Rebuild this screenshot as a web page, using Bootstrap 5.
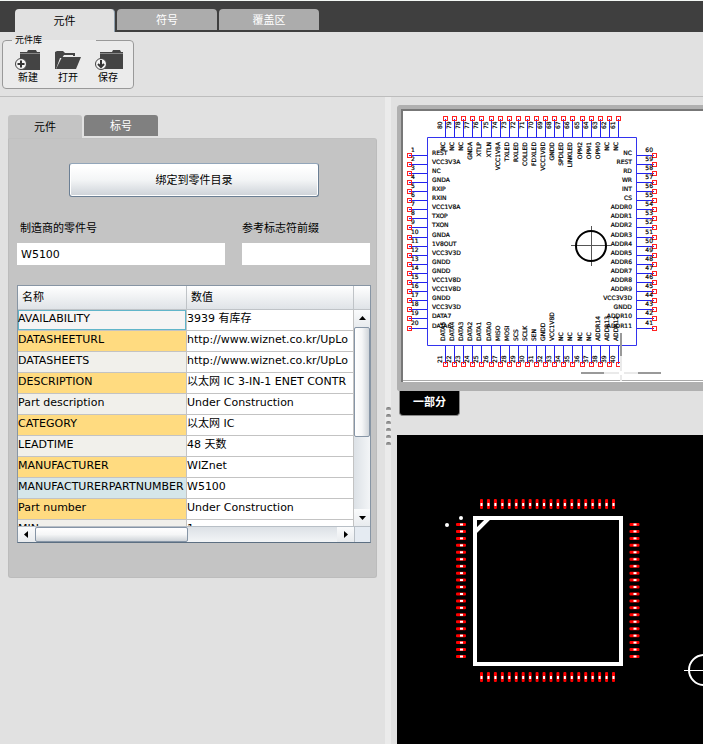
<!DOCTYPE html>
<html lang="zh-CN">
<head>
<meta charset="utf-8">
<meta name="viewport" content="width=device-width, initial-scale=1">
<title>元件</title>
<link href="https://cdn.jsdelivr.net/npm/bootstrap@5.3.0/dist/css/bootstrap.min.css" rel="stylesheet">
<style>
body { font: 11px/16px "DejaVu Sans", "Noto Sans CJK SC", sans-serif; color: #000; background: #e1e1e1; }
button, input { font: inherit; color: inherit; }
.topbar { background: #3f3f3f; border-top: 1px solid #f4f8f5; height: 32px; padding: 8px 15px 0; gap: 2px; }
.topbar button { width: 100px; height: 21px; border: 0; background: #acacac; border-radius: 4px 4px 0 0; color: #fff; padding: 2px 0 0; }
.topbar button.current { height: 23px; background: #e1e1e1; color: #000; border: solid #8fa0ae; border-width: 0 1px 0 0; }
.toolbar { height: 65px; padding: 3px 2px 0; border-bottom: 1px solid #bdbdbd; }
.library { width: 132px; height: 54px; border: 1px solid #999; border-radius: 4px; background: #ebebeb; }
.library legend { width: 84px; height: 11px; margin: 0 0 0 9px; padding-left: 3px; font-size: 9px; line-height: 11px; float: none; }
.tools { padding: 3px 0 0 5px; }
.tools button { width: 40px; border: 0; background: none; padding: 0; font-size: 10px; line-height: 14px; }
.tools svg { width: 32px; height: 22px; display: block; margin: 0 auto; }
.split { display: grid; grid-template-columns: 385px 6px minmax(0, 1fr); }
.side { padding: 18px 8px 0; }
.sidetabs { gap: 2px; height: 23px; }
.sidetabs button { width: 74px; height: 21px; border: 0; background: #808080; color: #fff; border-radius: 3px 3px 0 0; padding: 2px 0 0; }
.sidetabs button.current { height: 23px; background: #c4c4c4; color: #000; }
.sheet { background: #c4c4c4; border: 1px solid #bcbcbc; border-top-color: #c0c0c0; border-radius: 0 3px 3px 3px; padding: 24px 6px 34px 8px; }
.bind { display: block; width: 250px; height: 34px; margin: 0 0 0 52px; padding: 2px 0 0; border: 1px solid #6b7f94; border-top-color: #93a6ba; border-radius: 3px; background: linear-gradient(#fff 10%, #f3f5f6 50%, #cdd2d8); box-shadow: inset 0 0 0 1px #fff; }
.fields { display: grid; grid-template-columns: 208px 128px; justify-content: space-between; margin: 23px 0 20px; }
.fields label { display: block; padding: 1px 0 0 3px; margin-bottom: 6px; }
.fields div + div label { padding-left: 0; }
.fields input { display: block; width: 100%; height: 22px; border: 0; border-radius: 0; background: #fff; padding: 0 4px; }
.props { display: grid; grid-template: 240px 16px / minmax(0, 1fr) 16px; margin-right: -1px; border: 1px solid #8795a4; border-bottom-color: #5c6f82; }
.view { overflow: hidden; background: #fff; }
.view table { table-layout: fixed; width: 100%; border-collapse: separate; border-spacing: 0; white-space: nowrap; }
.view th { height: 24px; padding: 1px 4px 0; font-weight: 400; border: solid #bfc3c7; border-width: 0 1px 1px 0; background: linear-gradient(#fff, #dfe3e7); }
.view td { height: 21px; padding: 1px 0 3px; overflow: hidden; border: solid #c3c3c3; border-width: 0 1px 1px 0; }
.view td:first-child { background: #f1f0eb; overflow: visible; }
.view tr:nth-child(even) td:first-child { background: #ffdb80; }
.view tr.picked td:first-child { background: #f6f4f4; box-shadow: inset 0 0 0 1px #62b5ca; }
.view tr.related td:first-child { background: #d5e6ea; }
.vbar { background: linear-gradient(90deg, #dce1e6, #f3f5f7); }
.cap { height: 24px; background: linear-gradient(#fff, #dfe3e7); border-bottom: 1px solid #bfc3c7; }
.arrow { display: flex; align-items: center; justify-content: center; border: 0; padding: 0; background: linear-gradient(#fafbfc, #e8ebee); }
.arrow svg { width: 7px; height: 7px; }
.vbar .arrow { width: 16px; height: 17px; }
.vthumb { height: 110px; border: 1px solid #8695a6; border-radius: 2px; background: linear-gradient(90deg, #fff, #f5f6f7 50%, #cfd4d9); }
.hbar { background: linear-gradient(#dce1e6, #f3f5f7); border-top: 1px solid #b8bfc6; }
.hbar .arrow { width: 17px; height: 15px; }
.hthumb { width: 153px; border: 1px solid #8695a6; border-radius: 2px; background: linear-gradient(#fff, #f5f6f7 50%, #cfd4d9); }
.corner { background: #e5ebf2; border: solid #b8bfc6; border-width: 1px 0 0 1px; }
.grip { background: #ebebeb; border: 0; gap: 4px; padding: 310px 0 0; justify-self: stretch; }
.grip i { width: 5px; height: 3px; border-radius: 2px 2px 0 0; background: linear-gradient(#777, #aaa); }
.boards { padding: 8px 0 0 6px; min-height: calc(100vh - 97px); }
.schematic { border: solid #b0b0b0; border-width: 4px 0 9px 4px; border-radius: 4px 0 0 3px; }
.schematic svg { height: 273px; background: #fff; border: solid #777; border-width: 2px 0 0 2px; box-shadow: inset 0 -1px #fff, inset 0 -2px #aaa; }
.part { width: 61px; height: 25px; margin: 0 0 19px 2px; border: 1px solid #888; border-top: 0; border-radius: 0 0 4px 4px; background: #000; color: #fff; font-weight: 700; padding: 0; }
.boards svg { display: block; width: 100%; }
.footprint { background: #000; min-height: 309px; }
.footprint svg { height: 309px; }
.pins text { font-size: 6px; stroke: #000; stroke-width: .2px; }
</style>
<script src="https://cdn.jsdelivr.net/npm/bootstrap@5.3.0/dist/js/bootstrap.bundle.min.js"></script>
</head>
<body>
<nav class="topbar d-flex align-items-start">
  <button type="button" class="current">元件</button>
  <button type="button">符号</button>
  <button type="button">覆盖区</button>
</nav>
<div class="toolbar">
  <fieldset class="library">
    <legend>元件库</legend>
    <div class="tools d-flex">
      <button type="button"><svg viewBox="0 0 32 22"><path fill="#444" d="M8 3h7l1-2h8l1 2h3v18H8z"/><path stroke="#888" d="M8 4.500h20"/><circle cx="9" cy="15" r="5.500" fill="#f4f4f4" stroke="#444"/><path stroke="#333" stroke-width="2" d="M5.500 15h7M9 11.500v7"/></svg>新建</button>
      <button type="button"><svg viewBox="0 0 32 22"><path fill="#444" d="M3 20V3l2-1h6l2 2h10v3h-2V6H12l-2 3H8L4 20z"/><path fill="#444" d="M10 8h19l-5 12H4z"/></svg>打开</button>
      <button type="button"><svg viewBox="0 0 32 22"><path fill="#444" d="M8 3h12l1-2h7l1 2h2v17H8z"/><path stroke="#888" d="M8 4.500h23"/><circle cx="9" cy="15" r="5.500" fill="#f4f4f4" stroke="#444"/><path fill="none" stroke="#333" stroke-width="2" d="M9 11v7M6 15l3 3 3-3"/></svg>保存</button>
    </div>
  </fieldset>
</div>
<main class="split">
  <section class="side">
    <div class="sidetabs d-flex align-items-start">
      <button type="button" class="current">元件</button>
      <button type="button">标号</button>
    </div>
    <div class="sheet">
      <button type="button" class="bind">绑定到零件目录</button>
      <div class="fields">
        <div><label for="mpn">制造商的零件号</label><input id="mpn" type="text" value="W5100"></div>
        <div><label for="prefix">参考标志符前缀</label><input id="prefix" type="text"></div>
      </div>
      <div class="props">
        <div class="view">
          <table>
            <colgroup><col style="width:169px"><col></colgroup>
            <thead><tr><th>名称</th><th>数值</th></tr></thead>
            <tbody>
              <tr class="picked"><td>AVAILABILITY</td><td>3939 有库存</td></tr>
              <tr><td>DATASHEETURL</td><td>http://www.wiznet.co.kr/UpLo</td></tr>
              <tr><td>DATASHEETS</td><td>http://www.wiznet.co.kr/UpLo</td></tr>
              <tr><td>DESCRIPTION</td><td>以太网 IC 3-IN-1 ENET CONTR</td></tr>
              <tr><td>Part description</td><td>Under Construction</td></tr>
              <tr><td>CATEGORY</td><td>以太网 IC</td></tr>
              <tr><td>LEADTIME</td><td>48 天数</td></tr>
              <tr><td>MANUFACTURER</td><td>WIZnet</td></tr>
              <tr class="related"><td>MANUFACTURERPARTNUMBER</td><td>W5100</td></tr>
              <tr><td>Part number</td><td>Under Construction</td></tr>
              <tr><td>MIN</td><td>1</td></tr>
            </tbody>
          </table>
        </div>
        <div class="vbar d-flex flex-column">
          <div class="cap"></div>
          <button type="button" class="arrow" aria-label="向上"><svg viewBox="0 0 7 7"><path d="M0 5h7L3.500 1z"/></svg></button>
          <div class="vthumb"></div>
          <button type="button" class="arrow mt-auto" aria-label="向下"><svg viewBox="0 0 7 7"><path d="M0 2h7L3.500 6z"/></svg></button>
        </div>
        <div class="hbar d-flex">
          <button type="button" class="arrow" aria-label="向左"><svg viewBox="0 0 7 7"><path d="M5 0v7L1 3.500z"/></svg></button>
          <div class="hthumb"></div>
          <button type="button" class="arrow ms-auto" aria-label="向右"><svg viewBox="0 0 7 7"><path d="M2 0v7l4-3.500z"/></svg></button>
        </div>
        <div class="corner"></div>
      </div>
    </div>
  </section>
  <div class="grip d-flex flex-column align-items-center"><i></i><i></i><i></i><i></i><i></i><i></i></div>
  <section class="boards d-flex flex-column">
    <div class="schematic">
      <svg role="img" aria-label="W5100">
        <g id="symbol" class="pins" transform="translate(-403 -111)">
          <path fill="none" stroke="#3333ee" d="M427.500 137.500h209v208h-209z"/>
        </g>
        <g transform="translate(-403 -111)" fill="none">
          <path stroke="#555" d="M571 245.500h40M591.500 226v40"/>
          <circle cx="591" cy="246" r="15" stroke="#000" stroke-width="2"/>
          <path stroke="#eaeaea" stroke-width="2" d="M604 373h15M624 373h14M621 356v15M621 375v6"/>
          <path stroke="#999" stroke-width="2" d="M581 373h23M638 373h23M621 333v23"/>
        </g>
      </svg>
    </div>
    <button type="button" class="part">一部分</button>
    <div class="footprint flex-grow-1">
      <svg role="img" aria-label="覆盖区">
        <g id="pads" transform="translate(-397 -435)">
          <path fill="none" stroke="#fff" stroke-width="4" d="M475 518h146v146H475zM475 532l14-14"/>
          <circle cx="461" cy="518" r="2" fill="#fff"/>
          <circle cx="447" cy="525" r="2" fill="#fff"/>
          <circle cx="704" cy="670" r="15" fill="none" stroke="#fff" stroke-width="2"/>
          <path stroke="#fff" d="M684 670.500h40M704.500 650v40"/>
        </g>
      </svg>
    </div>
  </section>
</main>
<script>
const NS = "http://www.w3.org/2000/svg";
function add(parent, tag, attrs, text) {
  const el = document.createElementNS(NS, tag);
  for (const k in attrs) el.setAttribute(k, attrs[k]);
  if (text !== undefined) el.textContent = text;
  parent.appendChild(el);
}
const left = "REST VCC3V3A NC GNDA RXIP RXIN VCC1V8A TXOP TXON GNDA 1V8OUT VCC3V3D GNDD GNDD VCC1V8D VCC1V8D GNDD VCC3V3D DATA7 DATA6".split(" ");
const bottom = "DATA5 DATA4 DATA3 DATA2 DATA1 DATA0 MISO MOSI SCS SCLK SEN GNDD VCC1V8D NC NC NC NC ADDR14 ADDR13 ADDR12".split(" ");
const right = "NC REST RD WR INT CS ADDR0 ADDR1 ADDR2 ADDR3 ADDR4 ADDR5 ADDR6 ADDR7 ADDR8 ADDR9 VCC3V3D GNDD ADDR10 ADDR11".split(" ");
const topSide = "NC NC NC GNDA XTLP XTLN VCC1V8A TXLED RXLED COLLED FDXLED VCC1V8D GNDD SPDLED LINKLED OPM2 OPM1 OPM0 NC NC".split(" ");
const symbol = document.getElementById("symbol");
function pin(x, y, d) {
  add(symbol, "path", { d, stroke: "#2222ee" });
  add(symbol, "rect", { x: x - 2, y: y - 2, width: 4, height: 4, fill: "none", stroke: "#f22" });
}
function upright(x, y, text, anchor) {
  add(symbol, "text", { transform: `translate(${x} ${y}) rotate(-90)`, "text-anchor": anchor }, text);
}
for (let i = 0; i < 20; i++) {
  const y = Math.round(154.6 + i * 173 / 19) + .5;
  const x = Math.round(445 + i * 173 / 19) + .5;
  pin(409.5, y, `M409 ${y}h18`);
  add(symbol, "text", { x: 411, y: y - 4 }, i + 1);
  add(symbol, "text", { x: 432, y: y - 1 }, left[i]);
  pin(654.5, y, `M637 ${y}h17`);
  add(symbol, "text", { x: 653, y: y - 4, "text-anchor": "end" }, 60 - i);
  add(symbol, "text", { x: 632, y: y - 1, "text-anchor": "end" }, right[i]);
  pin(x, 118.5, `M${x} 119v18`);
  upright(x - 4, 129, 80 - i, "start");
  upright(x - 1, 142, topSide[i], "end");
  pin(x, 364.5, `M${x} 346v18`);
  upright(x - 4, 363, 21 + i, "start");
  upright(x - 1, 341, bottom[i], "start");
}
const pads = document.getElementById("pads");
for (let i = 0; i < 20; i++) {
  const x = 481.5 + i * 132 / 19, y = 524.5 + i * 132 / 19;
  for (const cy of [504, 677]) {
    add(pads, "rect", { x: x - 1.5, y: cy - 5, width: 3, height: 10, rx: 1, fill: "#f00" });
    add(pads, "rect", { x: x - 1, y: cy - 1, width: 2, height: 3, fill: "#fff" });
  }
  for (const cx of [461, 634.5]) {
    add(pads, "rect", { x: cx - 5, y: y - 1.5, width: 10, height: 3, rx: 1, fill: "#f00" });
    add(pads, "rect", { x: cx - 1, y: y - 1, width: 3, height: 2, fill: "#fff" });
  }
}
</script>
</body>
</html>
